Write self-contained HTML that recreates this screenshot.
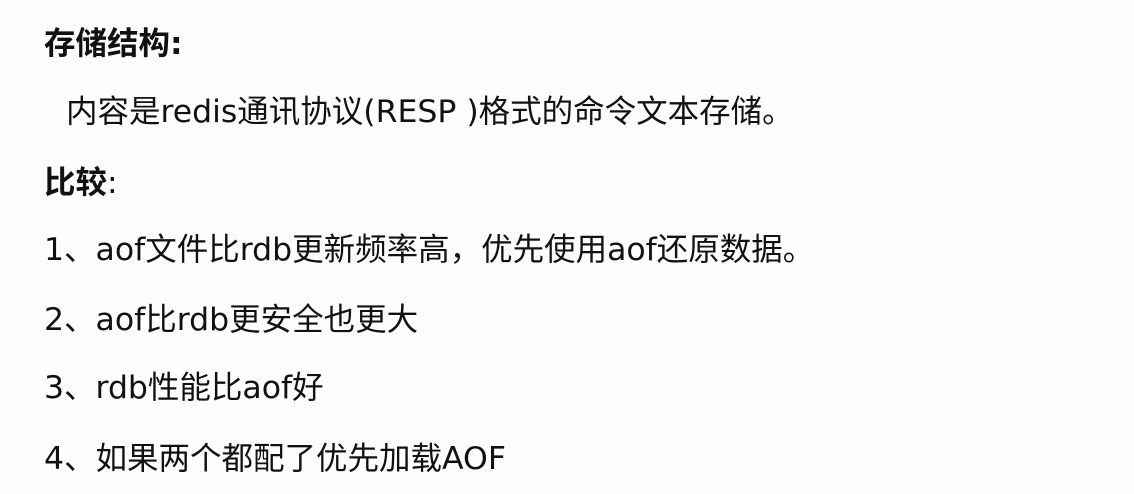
<!DOCTYPE html>
<html><head><meta charset="utf-8"><style>
html,body{margin:0;padding:0;background:#fdfdfd;width:1134px;height:494px;overflow:hidden}
.l{position:absolute;left:44px;height:40px;line-height:40px;font-size:31.5px;color:#111;white-space:nowrap;font-family:"DejaVu Sans","Noto Sans CJK SC",sans-serif}
b{font-weight:bold}
</style></head><body>
<div class="l" style="top:24px"><b>存储结构:</b></div>
<div class="l" style="top:92px;left:66px">内容是redis通讯协议(RESP )格式的命令文本存储。</div>
<div class="l" style="top:163px"><b>比较</b>:</div>
<div class="l" style="top:230px">1、aof文件比rdb更新频率高，优先使用aof还原数据。</div>
<div class="l" style="top:300px">2、aof比rdb更安全也更大</div>
<div class="l" style="top:368px">3、rdb性能比aof好</div>
<div class="l" style="top:439px">4、如果两个都配了优先加载AOF</div>
</body></html>
